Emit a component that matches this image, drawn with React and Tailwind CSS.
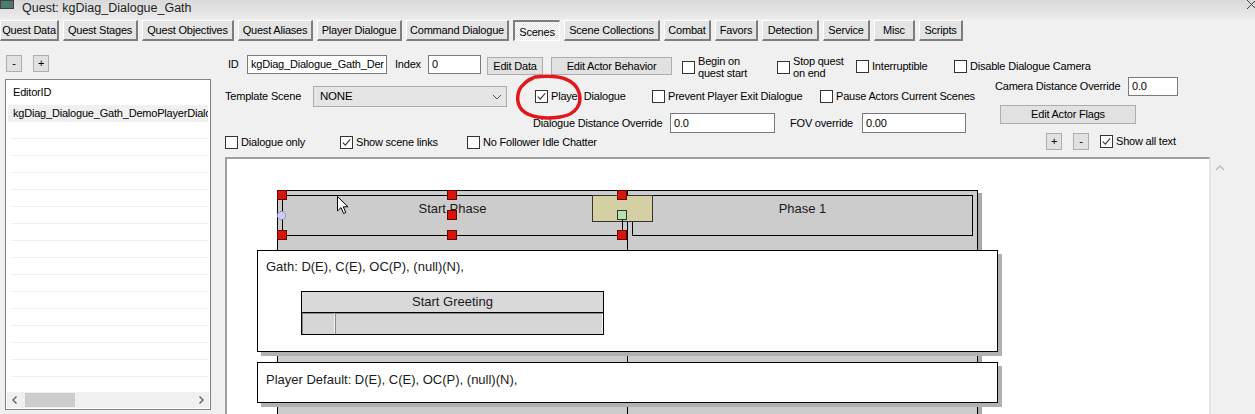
import React from "react";

const tabs = [
  ["Quest Data", "w-[59px]"],
  ["Quest Stages", "w-[75px]"],
  ["Quest Objectives", "w-[92px]"],
  ["Quest Aliases", "w-[75px]"],
  ["Player Dialogue", "w-[85px]"],
  ["Command Dialogue", "w-[103px]"],
  ["Scenes", "w-[47px]"],
  ["Scene Collections", "w-[96px]"],
  ["Combat", "w-[47px]"],
  ["Favors", "w-[43px]"],
  ["Detection", "w-[57px]"],
  ["Service", "w-[47px]"],
  ["Misc", "w-[41px]"],
  ["Scripts", "w-[44px]"],
];

function Check({ checked, children, className = "" }) {
  return (
    <div className={`flex items-center whitespace-nowrap ${className}`}>
      <span className="w-[13px] h-[13px] border border-[#333333] bg-white flex items-center justify-center shrink-0">
        {checked && (
          <svg width="11" height="11" viewBox="0 0 11 11">
            <path d="M1.8 5.6 L4.3 8.2 L9.2 2.4" fill="none" stroke="#3a3a3a" strokeWidth="1.2" />
          </svg>
        )}
      </span>
      <span className="ml-[3px]">{children}</span>
    </div>
  );
}

function Btn({ children, className = "" }) {
  return (
    <div className={`bg-[#e1e1e1] border border-[#adadad] flex items-center justify-center whitespace-nowrap ${className}`}>
      {children}
    </div>
  );
}

function Field({ value, className = "" }) {
  return (
    <div className={`bg-white border border-[#7a7a7a] px-[3px] flex items-center overflow-hidden whitespace-nowrap ${className}`}>
      {value}
    </div>
  );
}

function Handle({ className }) {
  return <div className={`absolute w-[10px] h-[10px] bg-[#d4160c] border border-[#6b0000] ${className}`} />;
}

export default function App() {
  return (
    <div className="relative w-[1255px] h-[414px] overflow-hidden bg-[#f0f0f0] text-[11px] tracking-[-0.2px] text-black font-['Liberation_Sans',Arial,sans-serif] flex flex-col">
      {/* title bar */}
      <div className="h-[19px] shrink-0 flex items-start justify-between bg-linear-to-b from-[#d9d9d9] to-[#ebebeb]">
        <div className="flex items-start">
          <div className="w-[14px] h-[9px] bg-[#5f6f6c] border border-[#3c4442]">
            <div className="w-[6px] h-[5px] bg-[#2f8a78] ml-[2px] mt-[1px]" />
          </div>
          <span className="ml-[8px] mt-[1px] text-[12.5px] tracking-normal text-[#1e1e1e] leading-[14px]">Quest: kgDiag_Dialogue_Gath</span>
        </div>
        <svg width="12" height="10" viewBox="0 0 12 10" className="-mr-[2px]">
          <path d="M2 0 L11 9 M11 0 L2 9" stroke="#444" strokeWidth="1" />
        </svg>
      </div>

      {/* tabs */}
      <div className="h-[21px] mt-[1px] shrink-0 flex gap-[4px]">
        {tabs.map(([t, w]) =>
          t === "Scenes" ? (
            <div
              key={t}
              className={`${w} h-full flex items-center justify-center pt-[2px] border-t-2 border-l-2 border-r border-b border-t-[#7d7d7d] border-l-[#7d7d7d] border-r-white border-b-white bg-[#f3f3f3] bg-[image:repeating-conic-gradient(#ffffff_0%_25%,#e2e2e2_0%_50%)] bg-[length:2px_2px]`}
            >
              {t}
            </div>
          ) : (
            <div
              key={t}
              className={`${w} h-full flex items-center justify-center border-t border-l border-r-2 border-b-2 border-t-white border-l-white border-r-[#7d7d7d] border-b-[#7d7d7d] bg-[#e4e4e4] whitespace-nowrap`}
            >
              {t}
            </div>
          )
        )}
      </div>

      <div className="flex flex-1 min-h-0">
        {/* left panel */}
        <div className="w-[225px] shrink-0 pt-[14px] flex flex-col">
          <div className="flex ml-[6px]">
            <Btn className="w-[16px] h-[17px]">-</Btn>
            <Btn className="w-[16px] h-[17px] ml-[11px]">+</Btn>
          </div>
          <div className="mt-[7px] ml-[5px] w-[206px] h-[331px] border border-[#828282] bg-white flex flex-col overflow-hidden">
            <div className="h-[25px] shrink-0 flex items-center pl-[7px]">EditorID</div>
            <div className="flex-1 min-h-0 overflow-hidden px-[2px]">
              <div className="h-[17px] bg-[#f0f0f0] flex items-center pl-[5px] whitespace-nowrap overflow-hidden">
                kgDiag_Dialogue_Gath_DemoPlayerDialc
              </div>
              {Array.from({ length: 16 }).map((_, i) => (
                <div key={i} className="h-[17px] border-b border-[#efefef] ml-[3px]" />
              ))}
            </div>
            <div className="h-[16px] shrink-0 bg-[#f0f0f0] flex items-center mb-[1px] mx-[1px]">
              <svg width="16" height="16" viewBox="0 0 16 16" className="shrink-0">
                <path d="M9.5 4.5 L6 8 L9.5 11.5" fill="none" stroke="#606060" strokeWidth="1.4" />
              </svg>
              <div className="w-[50px] h-[14px] bg-[#cdcdcd] ml-[2px]" />
              <div className="flex-1" />
              <svg width="16" height="16" viewBox="0 0 16 16" className="shrink-0">
                <path d="M6.5 4.5 L10 8 L6.5 11.5" fill="none" stroke="#606060" strokeWidth="1.4" />
              </svg>
            </div>
          </div>
        </div>

        {/* right area */}
        <div className="flex-1 flex flex-col pt-[14px] min-w-0">
          <div className="h-[22px] shrink-0 flex items-start">
            <div className="w-[22px] h-[19px] pl-[3px] flex items-center">ID</div>
            <Field value="kgDiag_Dialogue_Gath_Der" className="w-[140px] h-[19px]" />
            <div className="ml-[8px] w-[33px] h-[19px] flex items-center">Index</div>
            <Field value="0" className="w-[53px] h-[19px]" />
            <Btn className="ml-[6px] w-[56px] h-[18px] mt-[2px]">Edit Data</Btn>
            <Btn className="ml-[8px] w-[121px] h-[18px] mt-[2px]">Edit Actor Behavior</Btn>
            <Check className="ml-[10px] w-[95px] h-[24px]">
              <span className="block leading-[12px]">Begin on<br />quest start</span>
            </Check>
            <Check className="w-[79px] h-[24px]">
              <span className="block leading-[12px]">Stop quest<br />on end</span>
            </Check>
            <Check className="w-[98px] h-[22px]">Interruptible</Check>
            <Check className="h-[22px]">Disable Dialogue Camera</Check>
          </div>

          <div className="flex shrink-0">
            <div className="w-[770px] shrink-0 flex flex-col">
              <div className="mt-[9px] h-[21px] flex items-center">
                <div className="w-[88px] whitespace-nowrap">Template Scene</div>
                <div className="w-[194px] h-[21px] bg-[#e5e5e5] border border-[#acacac] pl-[6px] pr-[4px] flex items-center justify-between">
                  <span className="text-[11.5px]">NONE</span>
                  <svg width="10" height="6" viewBox="0 0 10 6">
                    <path d="M1 1 L5 5 L9 1" fill="none" stroke="#555" strokeWidth="1" />
                  </svg>
                </div>
                <Check checked className="ml-[28px] w-[117px]">Player Dialogue</Check>
                <Check className="w-[168px]">Prevent Player Exit Dialogue</Check>
                <Check>Pause Actors Current Scenes</Check>
              </div>
              <div className="mt-[6px] h-[20px] flex items-center">
                <div className="ml-[308px] w-[137px] whitespace-nowrap">Dialogue Distance Override</div>
                <Field value="0.0" className="w-[105px] h-[20px]" />
                <div className="ml-[15px] w-[72px] whitespace-nowrap">FOV override</div>
                <Field value="0.00" className="w-[104px] h-[20px]" />
              </div>
              <div className="h-[18px] flex items-center">
                <Check className="w-[115px]">Dialogue only</Check>
                <Check checked className="w-[127px]">Show scene links</Check>
                <Check>No Follower Idle Chatter</Check>
              </div>
            </div>

            <div className="flex-1 flex flex-col">
              <div className="h-[19px] flex items-center">
                <div className="w-[133px] whitespace-nowrap">Camera Distance Override</div>
                <Field value="0.0" className="w-[50px] h-[19px]" />
              </div>
              <Btn className="mt-[9px] ml-[5px] w-[136px] h-[19px]">Edit Actor Flags</Btn>
              <div className="mt-[9px] h-[17px] flex items-center">
                <Btn className="ml-[51px] w-[16px] h-[17px]">+</Btn>
                <Btn className="ml-[11px] w-[16px] h-[17px]">-</Btn>
                <Check checked className="ml-[11px]">Show all text</Check>
              </div>
            </div>
          </div>

          <div className="flex flex-1 mt-[6px] min-h-0">
            {/* scene canvas */}
            <div className="relative w-[985px] shrink-0 bg-white border-t-2 border-l-2 border-t-[#a0a0a0] border-l-[#a0a0a0] border-r border-r-[#e3e3e3] overflow-hidden text-[13px] tracking-normal text-[#1a1a1a]">
              {/* phase columns */}
              <div className="absolute left-[50px] top-[31px] w-[351px] h-[300px] bg-[#cccccc] border border-black" />
              <div className="absolute left-[400px] top-[31px] w-[351px] h-[300px] bg-[#cccccc] border border-black shadow-[4px_3px_0_#a9a9a9]" />
              <div className="absolute left-[55px] top-[36px] w-[341px] h-[41px] border border-black flex justify-center pt-[3px]">
                Start Phase
              </div>
              <div className="absolute left-[405px] top-[36px] w-[341px] h-[41px] border border-black flex justify-center pt-[3px]">
                Phase 1
              </div>
              {/* transition box */}
              <div className="absolute left-[365px] top-[36px] w-[61px] h-[27px] bg-[#d4d0a4] border border-[#333]" />
              <div className="absolute left-[395px] top-[61px] w-[1px] h-[10px] bg-black" />
              <div className="absolute left-[390px] top-[51px] w-[10px] h-[10px] bg-[#b6e4b0] border border-[#333]" />
              {/* selection handles */}
              <Handle className="left-[50px] top-[31px]" />
              <Handle className="left-[220px] top-[31px]" />
              <Handle className="left-[390px] top-[31px]" />
              <Handle className="left-[220px] top-[51px]" />
              <Handle className="left-[50px] top-[71px]" />
              <Handle className="left-[220px] top-[71px]" />
              <Handle className="left-[390px] top-[71px]" />
              <div className="absolute left-[50px] top-[52px] w-[9px] h-[9px] rounded-full bg-[#cfcff4] border border-dotted border-[#5656b8]" />
              {/* mouse cursor */}
              <svg className="absolute left-[110px] top-[37px]" width="13" height="19" viewBox="0 0 13 19">
                <path d="M0.5 0.5 L0.5 15 L4 11.6 L6.6 17.5 L8.8 16.6 L6.3 10.8 L11 10.8 Z" fill="#fff" stroke="#000" strokeWidth="1" />
              </svg>
              {/* actor boxes */}
              <div className="absolute left-[30px] top-[91px] w-[741px] h-[102px] bg-white border border-black shadow-[4px_4px_0_#b0b0b0]">
                <div className="pl-[8px] pt-[8px] leading-[16px]">Gath: D(E), C(E), OC(P), (null)(N),</div>
                <div className="absolute left-[43px] top-[40px] w-[303px] h-[44px] border border-black bg-[#d6d6d6] flex flex-col">
                  <div className="h-[21px] bg-[#d9d9d9] border-b border-black flex items-center justify-center">Start Greeting</div>
                  <div className="flex-1 flex">
                    <div className="w-[33px] border-t border-l border-[#8a8a8a] border-r border-r-[#f2f2f2]" />
                    <div className="flex-1 border-t border-l border-[#8a8a8a] border-r border-r-[#f2f2f2]" />
                  </div>
                </div>
              </div>
              <div className="absolute left-[30px] top-[203px] w-[741px] h-[41px] bg-white border border-black shadow-[4px_4px_0_#b0b0b0]">
                <div className="pl-[8px] pt-[9px] leading-[16px]">Player Default: D(E), C(E), OC(P), (null)(N),</div>
              </div>
            </div>
            <div className="flex-1 border-l border-[#e6e6e6] pt-[7px] pl-[4px]">
              <svg width="10" height="7" viewBox="0 0 10 7">
                <path d="M1 6 L5 2 L9 6" fill="none" stroke="#bcbcbc" strokeWidth="1.5" />
              </svg>
            </div>
          </div>
        </div>
      </div>

      {/* red annotation circle */}
      <svg className="absolute left-[508px] top-[70px]" width="82" height="56" viewBox="0 0 82 56">
        <path
          d="M27 7 C45 5, 64 7, 70 20 C76 33, 68 45, 52 47 C38 49, 22 48, 14 40 C7 32, 9 20, 16 14 C19 11, 22 9, 25 8"
          fill="none"
          stroke="#e3161b"
          strokeWidth="3.5"
          strokeLinecap="round"
        />
      </svg>
    </div>
  );
}
